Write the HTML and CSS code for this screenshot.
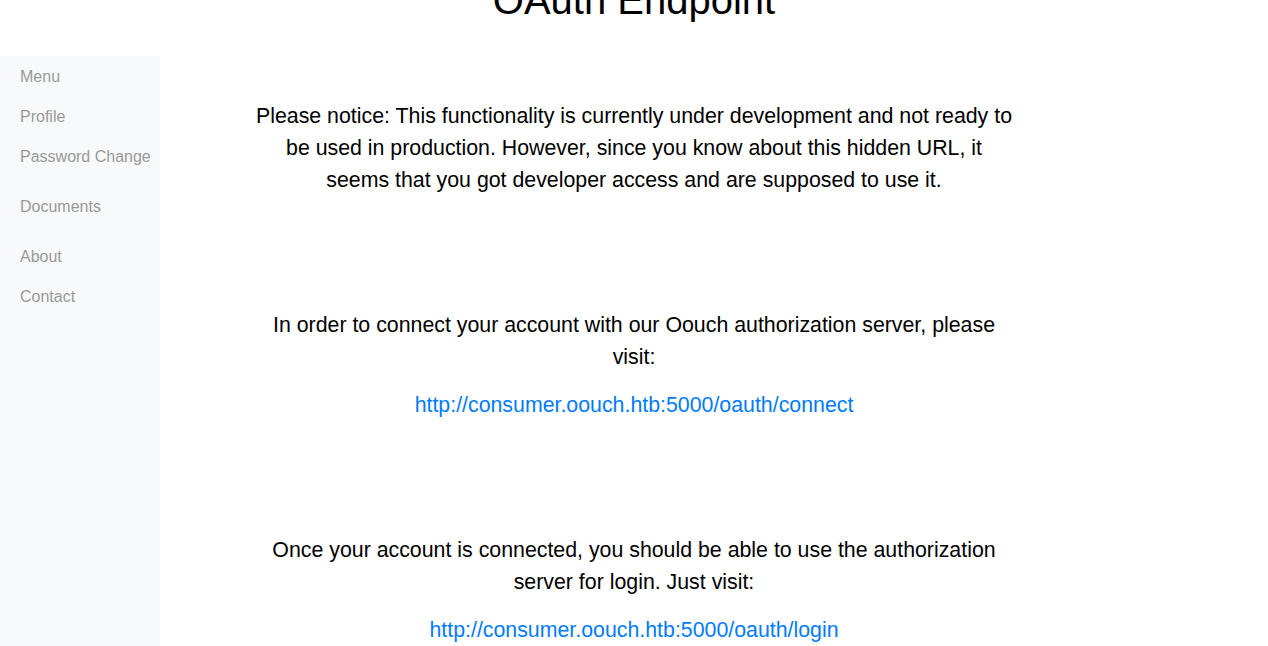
FILE: index.html
```html
<!DOCTYPE html>
<html lang="en">
<head>
<meta charset="utf-8">
<title>OAuth Endpoint</title>
<link rel="stylesheet" href="styles.css">
</head>
<body>
<header class="page-header">
  <h1 class="page-title">OAuth Endpoint</h1>
</header>
<div class="layout">
  <nav class="sidebar">
    <a class="nav-item" href="#">Menu</a>
    <a class="nav-item" href="#">Profile</a>
    <a class="nav-item" href="#">Password Change</a>
    <a class="nav-item spaced" href="#">Documents</a>
    <a class="nav-item spaced" href="#">About</a>
    <a class="nav-item" href="#">Contact</a>
  </nav>
  <main class="main">
    <div class="content">
      <p class="text">Please notice: This functionality is currently under development and not ready to be used in production. However, since you know about this hidden URL, it seems that you got developer access and are supposed to use it.</p>
      <p class="text section">In order to connect your account with our Oouch authorization server, please visit:</p>
      <p class="text link-line"><a class="link" href="#">http://consumer.oouch.htb:5000/oauth/connect</a></p>
      <p class="text section">Once your account is connected, you should be able to use the authorization server for login. Just visit:</p>
      <p class="text link-line"><a class="link" href="#">http://consumer.oouch.htb:5000/oauth/login</a></p>
    </div>
  </main>
</div>
</body>
</html>
```
FILE: styles.css
```css
html, body {
  margin: 0;
  padding: 0;
  background: #ffffff;
  font-family: "Liberation Sans", Arial, sans-serif;
  color: #000000;
}

.page-header {
  height: 56px;
  overflow: hidden;
}

.page-title {
  margin: -24px 0 0;
  font-size: 40px;
  font-weight: 400;
  line-height: 1.2;
  text-align: center;
}

.layout {
  display: flex;
  min-height: 590px;
}

.sidebar {
  width: 160px;
  flex: 0 0 160px;
  background: #f8f9fa;
  display: flex;
  flex-direction: column;
  padding-top: 1px;
  min-height: 600px;
}

.nav-item {
  display: block;
  padding: 0 0 0 20px;
  line-height: 40px;
  font-size: 16px;
  color: #999999;
  text-decoration: none;
  white-space: nowrap;
}

.nav-item.spaced {
  margin-top: 10px;
}

.main {
  flex: 1;
  padding-right: 160px;
  padding-top: 44px;
}

.content {
  width: 764px;
  margin: 0 auto;
}

.text {
  margin: 0;
  font-size: 21.33px;
  line-height: 32px;
  text-align: center;
}

.text.section {
  margin-top: 113px;
}

.text.link-line {
  margin-top: 16px;
}

.link {
  color: #007bff;
  text-decoration: none;
}
```
